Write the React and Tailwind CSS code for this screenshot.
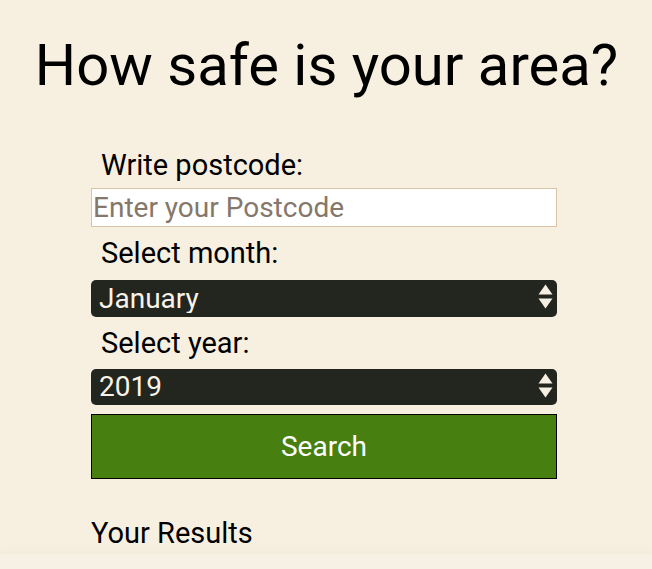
import React, { useState } from 'react';

function Arrows() {
    return (
        <svg width="15" height="25" viewBox="0 0 15 25" className="absolute right-[4px] top-[4px] pointer-events-none">
            <path d="M7.5 0.5 L14.5 10.5 L0.5 10.5 Z" fill="#f4efe0" />
            <path d="M7.5 24.5 L14.5 14.5 L0.5 14.5 Z" fill="#f4efe0" />
        </svg>
    );
}

function App() {
    const [postcode, setPostcode] = useState('');
    const [month, setMonth] = useState('January');
    const [year, setYear] = useState('2019');

    const months = ['January', 'February', 'March', 'April', 'May', 'June', 'July', 'August', 'September', 'October', 'November', 'December'];

    return (
        <div className="min-h-[569px] bg-[#f7f0e1] text-black font-['Roboto',sans-serif] overflow-hidden">
            <h1 className="text-center text-[58px] leading-[58px] pt-[36px] pl-[1px] font-normal">How safe is your area?</h1>

            <form className="w-[466px] ml-[91px] mt-[54px] flex flex-col" onSubmit={(e) => e.preventDefault()}>
                <label className="text-[29px] leading-[34px] pl-[10px] mb-[6px]">Write postcode:</label>
                <input
                    className="h-[39px] bg-white border border-[#d8c5a6] pl-[1px] text-[28px] placeholder:text-[#85776a] outline-none"
                    placeholder="Enter your Postcode"
                    value={postcode}
                    onChange={(e) => setPostcode(e.target.value)}
                />

                <label className="text-[29px] leading-[34px] pl-[10px] mt-[9px] mb-[10px]">Select month:</label>
                <div className="relative">
                    <select
                        className="appearance-none w-full h-[37px] rounded-[5px] bg-[#23251f] text-[#f8f3e6] text-[28px] leading-none pl-[8px] outline-none"
                        value={month}
                        onChange={(e) => setMonth(e.target.value)}
                    >
                        {months.map((m) => <option key={m}>{m}</option>)}
                    </select>
                    <Arrows />
                </div>

                <label className="text-[29px] leading-[34px] pl-[10px] mt-[9px] mb-[9px]">Select year:</label>
                <div className="relative">
                    <select
                        className="appearance-none w-full h-[36px] rounded-[5px] bg-[#23251f] text-[#f8f3e6] text-[28px] leading-none pl-[8px] outline-none"
                        value={year}
                        onChange={(e) => setYear(e.target.value)}
                    >
                        {['2019', '2018', '2017', '2016'].map((y) => <option key={y}>{y}</option>)}
                    </select>
                    <Arrows />
                </div>

                <button type="submit" className="mt-[9px] h-[65px] bg-[#477f10] border border-black text-white text-[28px]">Search</button>

                <h2 className="mt-[37px] text-[29px] leading-[34px]">Your Results</h2>
            </form>

            <div className="mt-[4px] h-[40px] bg-[#f7f1e5] shadow-[0_-3px_10px_rgba(120,100,60,0.04)]"></div>
        </div>
    );
}

export default App;
